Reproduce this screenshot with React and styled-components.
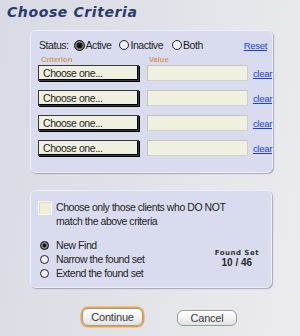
import React from "react";
import styled, { createGlobalStyle } from "styled-components";

const Global = createGlobalStyle`
  html, body { margin: 0; padding: 0; }
  body { font-family: "Liberation Sans", Arial, sans-serif; }
  #root { width: 300px; height: 336px; }
`;

const Page = styled.div`
  width: 300px;
  height: 336px;
  box-sizing: border-box;
  background: linear-gradient(100deg, #d8dae4 0%, #e2e3e9 50%, #ececef 100%);
  display: flex;
  flex-direction: column;
  padding-top: 3px;
  overflow: hidden;
`;

const Title = styled.h1`
  margin: 0 0 0 7px;
  height: 18px;
  line-height: 18px;
  font-family: "DejaVu Sans", Verdana, sans-serif;
  font-weight: bold;
  font-style: italic;
  font-size: 14px;
  letter-spacing: 0.6px;
  color: #2c3a68;
`;

const Panel = styled.div`
  box-sizing: border-box;
  margin-left: 30px;
  margin-top: ${(p) => p.$mt}px;
  width: ${(p) => p.$w}px;
  height: ${(p) => p.$h}px;
  background: #d9dcee;
  border: 1px solid #eceef7;
  border-radius: 6px;
  box-shadow: 1px 1px 1px rgba(90, 90, 110, 0.45);
  display: flex;
  flex-direction: column;
`;

const Text = styled.span`
  font-family: "Liberation Sans", Arial, sans-serif;
  font-size: 10.5px;
  line-height: 12px;
  letter-spacing: -0.45px;
  color: #1e1e1e;
`;

const StatusRow = styled.div`
  display: flex;
  align-items: center;
  height: 12px;
  margin-top: 8px;
  padding-left: 8px;
  padding-right: 5px;
`;

const RadioGroup = styled.label`
  display: flex;
  align-items: center;
  height: 12px;
  gap: ${(p) => p.$gap ?? 1}px;
  margin-left: ${(p) => p.$ml ?? 0}px;
`;

const Radio = styled.span`
  box-sizing: border-box;
  display: inline-block;
  flex: none;
  width: ${(p) => p.$size}px;
  height: ${(p) => p.$size}px;
  border-radius: 50%;
  border: 1px solid #222;
  background: ${(p) => (p.$checked ? "#111" : "#eef0f6")};
  box-shadow: ${(p) => (p.$checked ? "inset 0 0 0 1.5px #8a8a8a, inset 0 0 0 2px #222" : "none")};
`;

const Link = styled.a`
  font-family: "Liberation Sans", Arial, sans-serif;
  font-size: 9.5px;
  letter-spacing: -0.3px;
  color: #1b3fe0;
  text-decoration: underline;
  cursor: pointer;
`;

const Spacer = styled.div`
  flex: 1;
`;

const LabelRow = styled.div`
  display: flex;
  height: 9px;
  margin-top: 4px;
  padding-left: 10px;
  align-items: center;
`;

const ColLabel = styled.span`
  font-family: "Liberation Sans", Arial, sans-serif;
  font-size: 7.5px;
  font-weight: bold;
  color: #d69a6c;
  width: ${(p) => p.$w}px;
`;

const Rows = styled.div`
  display: flex;
  flex-direction: column;
  gap: 9px;
  margin-top: 1px;
  padding-left: 7px;
`;

const Row = styled.div`
  display: flex;
  align-items: center;
  height: 16px;
`;

const Select = styled.div`
  box-sizing: border-box;
  width: 102px;
  height: 16px;
  background: #f0f0e0;
  border: 1px solid #3a3a3a;
  box-shadow: 1px 1px 0 #000, inset -1px -1px 0 #000;
  display: flex;
  align-items: center;
  padding-left: 4px;
`;

const ValueBox = styled.div`
  box-sizing: border-box;
  width: 101px;
  height: 16px;
  margin-left: 8px;
  background: #f0f0e0;
  border: 1px solid #d2d2c6;
  border-top-color: #c4c4b8;
  border-left-color: #c4c4b8;
`;

const ClearLink = styled(Link)`
  margin-left: 5px;
`;

const CheckRow = styled.div`
  display: flex;
  align-items: flex-start;
  margin-top: 10px;
  padding-left: 7px;
`;

const Checkbox = styled.span`
  box-sizing: border-box;
  flex: none;
  width: 14px;
  height: 14px;
  background: #efefd9;
  border: 1px solid #f6f6ee;
  box-shadow: inset 1px 1px 0 #dcdcc8;
`;

const CheckText = styled(Text)`
  margin-left: 4px;
  line-height: 14px;
  margin-top: -1px;
`;

const Bottom = styled.div`
  display: flex;
  margin-top: 11px;
  padding-left: 9px;
`;

const RadioList = styled.div`
  display: flex;
  flex-direction: column;
  gap: 2px;
`;

const Found = styled.div`
  margin-left: auto;
  margin-right: 12px;
  margin-top: 10px;
  display: flex;
  flex-direction: column;
  align-items: center;
`;

const FoundLabel = styled.span`
  font-family: "DejaVu Sans", Verdana, sans-serif;
  font-size: 7px;
  font-weight: bold;
  letter-spacing: 0.5px;
  color: #333;
  line-height: 9px;
`;

const FoundCount = styled.span`
  font-family: "Liberation Sans", Arial, sans-serif;
  font-size: 10px;
  font-weight: bold;
  color: #2a2a2a;
  line-height: 10px;
`;

const Buttons = styled.div`
  display: flex;
  align-items: center;
  margin-top: 20px;
  padding-left: 82px;
  gap: 34px;
`;

const Button = styled.button`
  box-sizing: border-box;
  width: ${(p) => (p.$focused ? 61 : 60)}px;
  height: ${(p) => (p.$focused ? 18 : 16)}px;
  border-radius: 6px;
  border: 1px solid #9a9a9a;
  background: linear-gradient(#ffffff, #f2f2f2 50%, #e2e2e2);
  box-shadow: ${(p) => (p.$focused ? "0 0 0 1.5px #f3a636" : "none")};
  font-family: "Liberation Sans", Arial, sans-serif;
  font-size: 11px;
  font-weight: normal;
  letter-spacing: -0.2px;
  color: #3a3a3a;
  padding: 0;
  margin: ${(p) => (p.$focused ? "0" : "1px 0 0")};
`;

const crit = [0, 1, 2, 3];

export default function App() {
  return (
    <>
      <Global />
      <Page>
        <Title>Choose Criteria</Title>
        <Panel $mt={9} $w={243} $h={143}>
          <StatusRow>
            <Text>Status:</Text>
            <RadioGroup $ml={5} $gap={1}>
              <Radio $size={11} $checked />
              <Text>Active</Text>
            </RadioGroup>
            <RadioGroup $ml={8} $gap={1}>
              <Radio $size={10} />
              <Text>Inactive</Text>
            </RadioGroup>
            <RadioGroup $ml={9} $gap={1}>
              <Radio $size={10} />
              <Text>Both</Text>
            </RadioGroup>
            <Spacer />
            <Link>Reset</Link>
          </StatusRow>
          <LabelRow>
            <ColLabel $w={108}>Criterion</ColLabel>
            <ColLabel>Value</ColLabel>
          </LabelRow>
          <Rows>
            {crit.map((i) => (
              <Row key={i}>
                <Select>
                  <Text>Choose one...</Text>
                </Select>
                <ValueBox />
                <ClearLink>clear</ClearLink>
              </Row>
            ))}
          </Rows>
        </Panel>
        <Panel $mt={17} $w={242} $h={98}>
          <CheckRow>
            <Checkbox />
            <CheckText>
              Choose only those clients who DO NOT
              <br />
              match the above criteria
            </CheckText>
          </CheckRow>
          <Bottom>
            <RadioList>
              <RadioGroup $gap={7}>
                <Radio $size={9} $checked />
                <Text>New Find</Text>
              </RadioGroup>
              <RadioGroup $gap={7}>
                <Radio $size={9} />
                <Text>Narrow the found set</Text>
              </RadioGroup>
              <RadioGroup $gap={7}>
                <Radio $size={9} />
                <Text>Extend the found set</Text>
              </RadioGroup>
            </RadioList>
            <Found>
              <FoundLabel>Found Set</FoundLabel>
              <FoundCount>10 / 46</FoundCount>
            </Found>
          </Bottom>
        </Panel>
        <Buttons>
          <Button $focused>Continue</Button>
          <Button>Cancel</Button>
        </Buttons>
      </Page>
    </>
  );
}
